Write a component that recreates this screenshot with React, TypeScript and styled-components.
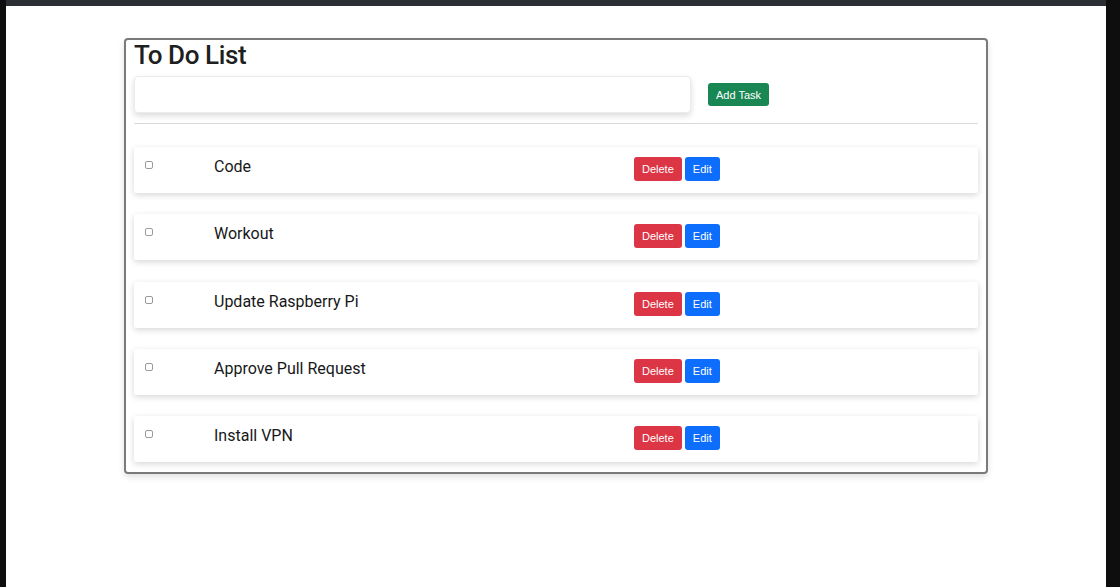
import React from 'react';
import styled, { createGlobalStyle } from 'styled-components';

const tasks = ['Code', 'Workout', 'Update Raspberry Pi', 'Approve Pull Request', 'Install VPN'];

const GlobalStyle = createGlobalStyle`
  html, body {
    margin: 0;
    padding: 0;
    background: #0e0e0e;
    font-family: "Liberation Sans", Arial, sans-serif;
    color: #212529;
  }
`;

const Frame = styled.div`
  height: 587px;
  box-sizing: border-box;
  border-top: 6px solid #2b2e33;
  margin: 0 14px 0 6px;
  background: #fff;
  padding: 32px 0 0 118px;
`;

const Card = styled.section`
  width: 864px;
  box-sizing: border-box;
  border: 2px solid #7a7a7a;
  border-radius: 4px;
  padding: 0 8px 10px 8px;
  box-shadow: 0 3px 6px rgba(0, 0, 0, 0.12);
`;

const Title = styled.h1`
  margin: 0;
  font-family: Roboto, "Liberation Sans", Arial, sans-serif;
  font-size: 26px;
  font-weight: 500;
  line-height: 31px;
  letter-spacing: -0.4px;
  color: #1d1f21;
`;

const AddRow = styled.div`
  display: flex;
  align-items: center;
  gap: 17px;
  margin-top: 5px;
`;

const TaskInput = styled.input`
  width: 557px;
  height: 37px;
  box-sizing: border-box;
  border: 1px solid #ececec;
  border-radius: 4px;
  box-shadow: 0 3px 6px rgba(0, 0, 0, 0.14);
  outline: none;
`;

const Button = styled.button<{ $color: string }>`
  border: none;
  border-radius: 3px;
  background: ${(p) => p.$color};
  color: #fff;
  font-family: "Liberation Sans", Arial, sans-serif;
  font-size: 11px;
  padding: 0 8px;
  height: 24px;
  cursor: pointer;
`;

const Divider = styled.hr`
  border: none;
  border-top: 1px solid #d9d9d9;
  margin: 10px 0 23px 0;
`;

const List = styled.div`
  display: flex;
  flex-direction: column;
  gap: 21.3px;
`;

const Row = styled.div`
  display: grid;
  grid-template-columns: 69px 420px auto;
  align-items: start;
  height: 46px;
  box-sizing: border-box;
  padding: 10px 0 0 11px;
  background: #fff;
  box-shadow: 0 2px 6px rgba(0, 0, 0, 0.16);
  border-radius: 2px;
`;

const Check = styled.span`
  display: block;
  width: 6px;
  height: 6px;
  margin-top: 4px;
  border: 1px solid #9a9a9a;
  border-radius: 2px;
`;

const Label = styled.span`
  font-family: Roboto, "Liberation Sans", Arial, sans-serif;
  font-size: 16px;
  font-weight: 400;
  line-height: 20px;
  color: #161819;
`;

const Actions = styled.div`
  display: flex;
  gap: 3px;
`;

export default function App() {
  return (
    <>
      <GlobalStyle />
      <Frame>
        <Card>
          <Title>To Do List</Title>
          <AddRow>
            <TaskInput type="text" />
            <Button $color="#198754" style={{ height: 23 }}>Add Task</Button>
          </AddRow>
          <Divider />
          <List>
            {tasks.map((t) => (
              <Row key={t}>
                <Check />
                <Label>{t}</Label>
                <Actions>
                  <Button $color="#dc3545">Delete</Button>
                  <Button $color="#0d6efd">Edit</Button>
                </Actions>
              </Row>
            ))}
          </List>
        </Card>
      </Frame>
    </>
  );
}
